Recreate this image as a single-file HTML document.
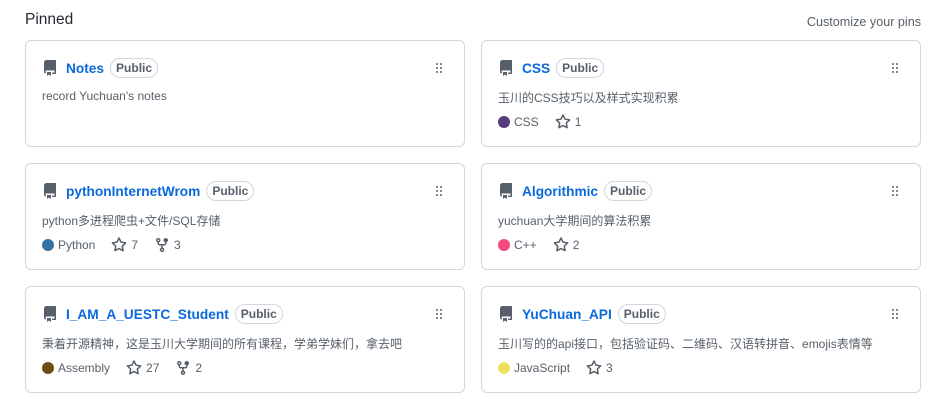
<!DOCTYPE html><html><head><meta charset="utf-8"><style>
body{margin:0;width:952px;height:415px;background:#fff;font-family:"Liberation Sans","Noto Sans CJK SC",sans-serif;color:#24292f;position:relative;overflow:hidden}
.h{position:absolute;left:25px;top:11px;font-size:15.5px}
.c{position:absolute;right:31px;top:15px;font-size:12.6px;color:#57606a}
.card{position:absolute;width:438px;height:105px;border:1px solid #d0d7de;border-radius:6px}
.t{position:absolute;left:16px;top:18px;display:flex;align-items:center;height:18px}
.t svg{margin-right:8px}
.t b{color:#0969da;font-size:13.7px;font-weight:bold}
.p{margin-left:6px;border:1px solid #d0d7de;border-radius:10px;font-size:12px;font-weight:bold;color:#57606a;padding:1px 5px;line-height:16px}
.d{position:absolute;left:16px;top:48px;font-size:12px;color:#57606a}
.m{position:absolute;left:16px;top:73px;font-size:12px;color:#57606a;display:flex;align-items:center}
.dot{width:12px;height:12px;border-radius:50%;display:inline-block;margin-right:4px}
.m span.s{display:inline-flex;align-items:center;margin-left:16px}
.m svg{margin-right:4px}
.g{position:absolute;right:17px;top:19px}
</style></head><body>
<div class="h">Pinned</div><div class="c">Customize your pins</div>
<svg width="0" height="0" style="position:absolute"><defs>
<symbol id="r" viewBox="0 0 16 16"><path fill="#57606a" d="M2 2.5A2.5 2.5 0 014.5 0h8.75a.75.75 0 01.75.75v12.5a.75.75 0 01-.75.75h-2.5a.75.75 0 110-1.5h1.75v-2h-8a1 1 0 00-.714 1.7.75.75 0 01-1.072 1.050A2.495 2.495 0 012 11.5v-9zm10.5-1V9h-8c-.356 0-.694.074-1 .208V2.5a1 1 0 011-1h8zM5 12.250v3.250a.25.25 0 00.4.2l1.450-1.087a.25.25 0 01.3 0L8.6 15.7a.25.25 0 00.4-.2v-3.25a.25.25 0 00-.25-.25h-3.5a.25.25 0 00-.25.25z"/></symbol>
<symbol id="st" viewBox="0 0 16 16"><path fill="#57606a" d="M8 .25a.75.75 0 01.673.418l1.882 3.815 4.21.612a.75.75 0 01.416 1.279l-3.046 2.97.719 4.192a.75.75 0 01-1.088.791L8 12.347l-3.766 1.98a.75.75 0 01-1.088-.79l.72-4.194L.818 6.374a.75.75 0 01.416-1.28l4.21-.611L7.327.668A.75.75 0 018 .25zm0 2.445L6.615 5.5a.75.75 0 01-.564.41l-3.097.45 2.24 2.184a.75.75 0 01.216.664l-.528 3.084 2.769-1.456a.75.75 0 01.698 0l2.77 1.456-.53-3.084a.75.75 0 01.216-.664l2.24-2.183-3.096-.45a.75.75 0 01-.564-.41L8 2.694z"/></symbol>
<symbol id="f" viewBox="0 0 16 16"><path fill="#57606a" d="M5 3.25a.75.75 0 11-1.5 0 .75.75 0 011.5 0zm0 2.122a2.25 2.25 0 10-1.5 0v.878A2.25 2.25 0 005.75 8.5h1.5v2.128a2.251 2.251 0 101.5 0V8.5h1.5a2.25 2.25 0 002.25-2.25v-.878a2.25 2.25 0 10-1.5 0v.878a.75.75 0 01-.75.75h-4.5A.75.75 0 015 6.25v-.878zm3.75 7.378a.75.75 0 11-1.5 0 .75.75 0 011.5 0zm3-8.75a.75.75 0 100-1.5.75.75 0 000 1.5z"/></symbol>
<symbol id="gr" viewBox="0 0 16 16"><path fill="#57606a" d="M10 13a1 1 0 100-2 1 1 0 000 2zm-4 0a1 1 0 100-2 1 1 0 000 2zm1-5a1 1 0 11-2 0 1 1 0 012 0zm3 1a1 1 0 100-2 1 1 0 000 2zm1-5a1 1 0 11-2 0 1 1 0 012 0zM6 5a1 1 0 100-2 1 1 0 000 2z"/></symbol>
</defs></svg>

<div class="card" style="left:25px;top:40px"><div class="t"><svg width="16" height="16"><use href="#r"/></svg><b>Notes</b><span class="p">Public</span></div><svg class="g" width="16" height="16"><use href="#gr"/></svg><div class="d">record Yuchuan's notes</div></div>

<div class="card" style="left:481px;top:40px"><div class="t"><svg width="16" height="16"><use href="#r"/></svg><b>CSS</b><span class="p">Public</span></div><svg class="g" width="16" height="16"><use href="#gr"/></svg><div class="d">玉川的CSS技巧以及样式实现积累</div><div class="m"><span class="dot" style="background:#563d7c"></span>CSS<span class="s"><svg width="16" height="16"><use href="#st"/></svg>1</span></div></div>

<div class="card" style="left:25px;top:163px"><div class="t"><svg width="16" height="16"><use href="#r"/></svg><b>pythonInternetWrom</b><span class="p">Public</span></div><svg class="g" width="16" height="16"><use href="#gr"/></svg><div class="d">python多进程爬虫+文件/SQL存储</div><div class="m"><span class="dot" style="background:#3572a5"></span>Python<span class="s"><svg width="16" height="16"><use href="#st"/></svg>7</span><span class="s"><svg width="16" height="16"><use href="#f"/></svg>3</span></div></div>

<div class="card" style="left:481px;top:163px"><div class="t"><svg width="16" height="16"><use href="#r"/></svg><b>Algorithmic</b><span class="p">Public</span></div><svg class="g" width="16" height="16"><use href="#gr"/></svg><div class="d">yuchuan大学期间的算法积累</div><div class="m"><span class="dot" style="background:#f34b7d"></span>C++<span class="s"><svg width="16" height="16"><use href="#st"/></svg>2</span></div></div>

<div class="card" style="left:25px;top:286px"><div class="t"><svg width="16" height="16"><use href="#r"/></svg><b>I_AM_A_UESTC_Student</b><span class="p">Public</span></div><svg class="g" width="16" height="16"><use href="#gr"/></svg><div class="d">秉着开源精神，这是玉川大学期间的所有课程，学弟学妹们，拿去吧</div><div class="m"><span class="dot" style="background:#6e4c13"></span>Assembly<span class="s"><svg width="16" height="16"><use href="#st"/></svg>27</span><span class="s"><svg width="16" height="16"><use href="#f"/></svg>2</span></div></div>

<div class="card" style="left:481px;top:286px"><div class="t"><svg width="16" height="16"><use href="#r"/></svg><b>YuChuan_API</b><span class="p">Public</span></div><svg class="g" width="16" height="16"><use href="#gr"/></svg><div class="d">玉川写的的api接口，包括验证码、二维码、汉语转拼音、emojis表情等</div><div class="m"><span class="dot" style="background:#f1e05a"></span>JavaScript<span class="s"><svg width="16" height="16"><use href="#st"/></svg>3</span></div></div>
</body></html>
